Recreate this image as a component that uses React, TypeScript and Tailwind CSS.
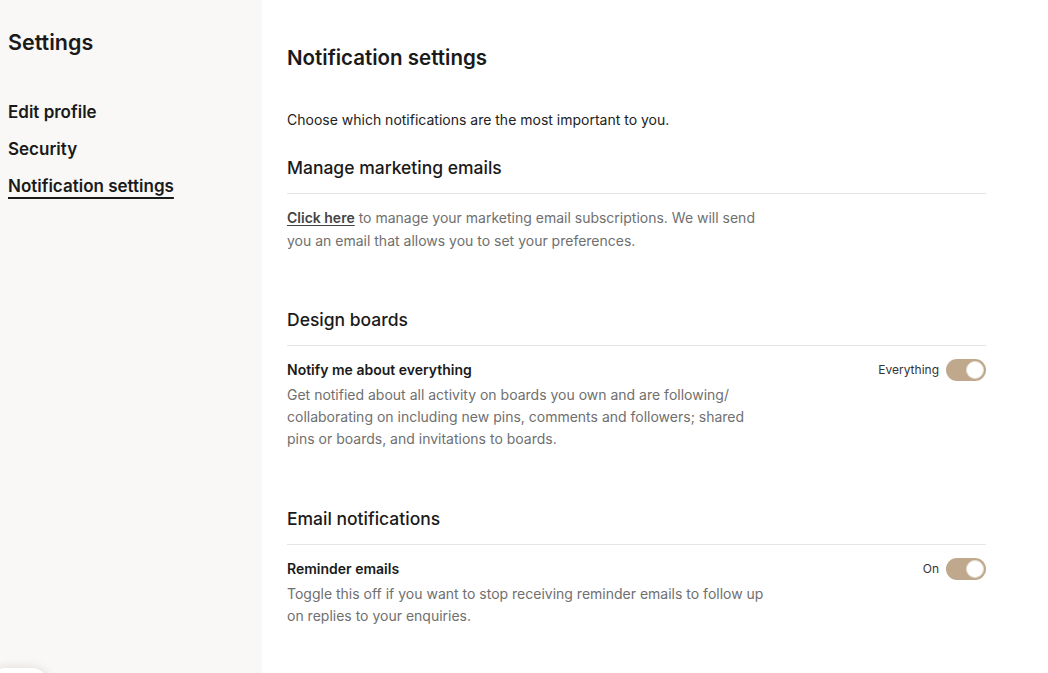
import React, { useState } from 'react';

const font = { fontFamily: 'Inter, "Liberation Sans", sans-serif' };

const Toggle: React.FC<{ label: string; on: boolean; onChange: () => void }> = ({ label, on, onChange }) => (
  <div className="flex items-center gap-[7px] shrink-0">
    <span className="text-[12px] text-[#333]">{label}</span>
    <button
      onClick={onChange}
      className={`relative w-10 h-[22px] rounded-full transition-colors ${on ? 'bg-[#bfa88c]' : 'bg-gray-300'}`}
    >
      <span
        className={`absolute top-[2px] w-[18px] h-[18px] rounded-full bg-white border border-[#e6ded3] transition-all ${on ? 'left-[20px]' : 'left-[2px]'}`}
      />
    </button>
  </div>
);

const Section: React.FC<{ title: string; className?: string; children: React.ReactNode }> = ({ title, className, children }) => (
  <section className={className}>
    <h3 className="text-[17.5px] font-medium text-[#1a1a1a] leading-[26px] pb-[12px] border-b border-[#e5e5e5]">{title}</h3>
    <div className="pt-[13px]">{children}</div>
  </section>
);

export default function App() {
  const [everything, setEverything] = useState(true);
  const [reminders, setReminders] = useState(true);

  return (
    <div className="flex h-[673px] bg-white overflow-hidden" style={font}>
      {/* Sidebar */}
      <aside className="relative w-[262px] shrink-0 bg-[#f9f8f6] px-2 pt-[28px]">
        <h1 className="text-[21.5px] font-semibold text-[#1a1a1a] leading-[28px]">Settings</h1>
        <nav className="mt-[43px] flex flex-col gap-[11px]">
          <a className="text-[17px] font-semibold text-[#1a1a1a] leading-[26px] w-fit">Edit profile</a>
          <a className="text-[17px] font-semibold text-[#1a1a1a] leading-[26px] w-fit">Security</a>
          <a className="text-[17px] font-semibold text-[#1a1a1a] leading-[26px] w-fit underline underline-offset-[5px] decoration-[1.5px]">Notification settings</a>
        </nav>
        <div className="absolute left-[-10px] top-[668px] w-[58px] h-[40px] rounded-2xl bg-white shadow-[0_0_12px_rgba(0,0,0,0.12)]" />
      </aside>

      {/* Main */}
      <main className="flex-1 pl-[25px] pr-[62px] pt-[44px]">
        <h2 className="text-[20.5px] font-semibold text-[#1a1a1a] leading-[28px]">Notification settings</h2>
        <p className="mt-[37px] text-[14px] text-[#222] leading-[22px]">Choose which notifications are the most important to you.</p>

        <Section title="Manage marketing emails" className="mt-[24px]">
          <p className="-mt-px max-w-[480px] text-[14px] text-[#6f6f6f] leading-[23px]">
            <a className="font-semibold text-[#444] underline underline-offset-2">Click here</a> to manage your marketing email subscriptions. We will send you an email that allows you to set your preferences.
          </p>
        </Section>

        <Section title="Design boards" className="mt-[55px]">
          <div className="flex justify-between items-start">
            <div className="max-w-[480px]">
              <h4 className="text-[14px] font-semibold text-[#1a1a1a] leading-[22px]">Notify me about everything</h4>
              <p className="mt-[3px] text-[14px] text-[#6f6f6f] leading-[22px]">
                Get notified about all activity on boards you own and are following/ collaborating on including new pins, comments and followers; shared pins or boards, and invitations to boards.
              </p>
            </div>
            <Toggle label="Everything" on={everything} onChange={() => setEverything(!everything)} />
          </div>
        </Section>

        <Section title="Email notifications" className="mt-[56px]">
          <div className="flex justify-between items-start">
            <div className="max-w-[480px]">
              <h4 className="text-[14px] font-semibold text-[#1a1a1a] leading-[22px]">Reminder emails</h4>
              <p className="mt-[3px] text-[14px] text-[#6f6f6f] leading-[22px]">
                Toggle this off if you want to stop receiving reminder emails to follow up on replies to your enquiries.
              </p>
            </div>
            <Toggle label="On" on={reminders} onChange={() => setReminders(!reminders)} />
          </div>
        </Section>
      </main>
    </div>
  );
}
